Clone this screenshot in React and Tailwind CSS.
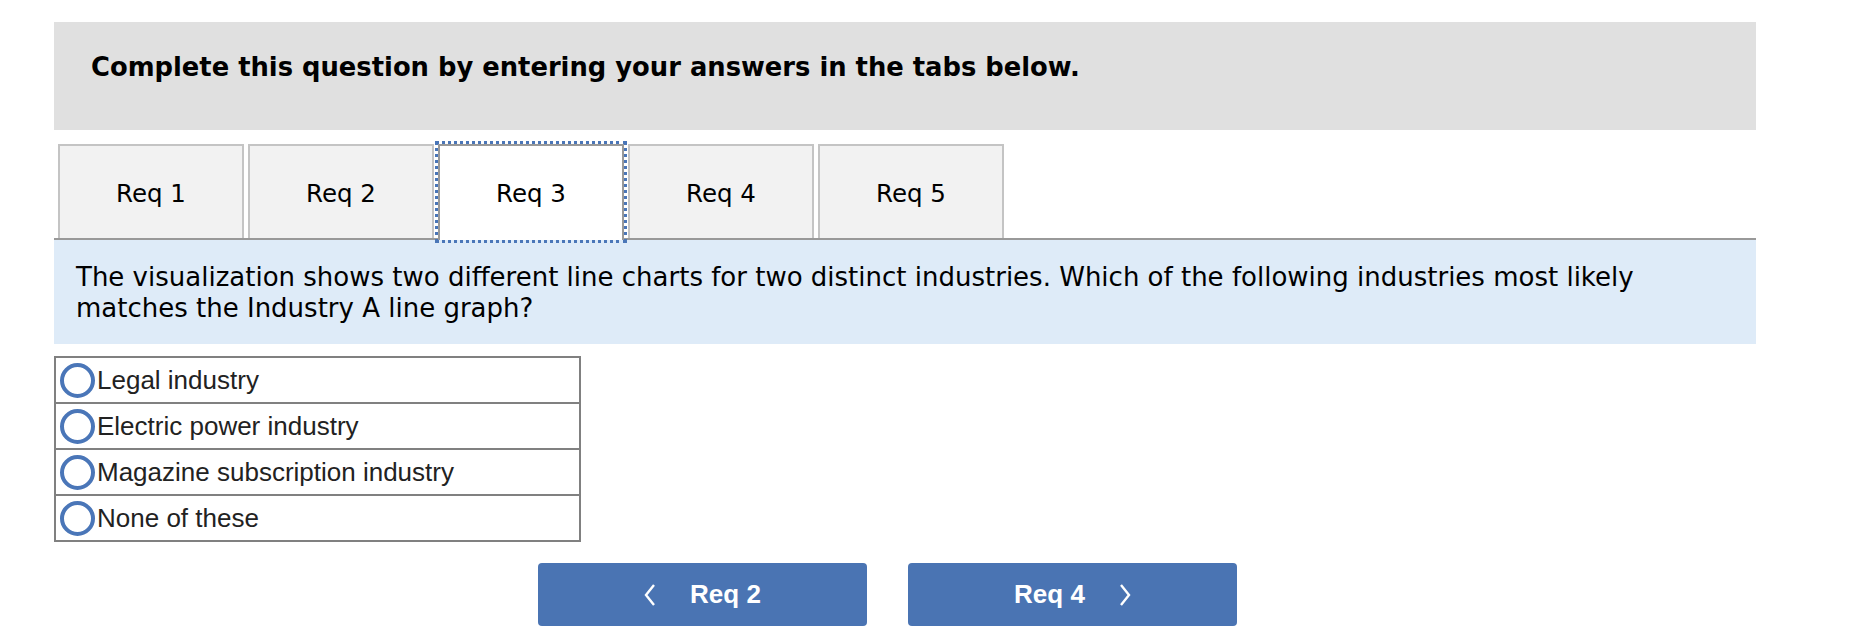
import React from "react";

const TABS = ["Req 1", "Req 2", "Req 3", "Req 4", "Req 5"];
const ACTIVE = 2;

const OPTIONS = [
  "Legal industry",
  "Electric power industry",
  "Magazine subscription industry",
  "None of these",
];

function Chevron({ dir }) {
  return (
    <svg width="12" height="22" viewBox="0 0 12 22" aria-hidden="true">
      <polyline
        points={dir === "left" ? "10,1 2,11 10,21" : "2,1 10,11 2,21"}
        fill="none"
        stroke="white"
        strokeWidth="2.4"
      />
    </svg>
  );
}

function Radio() {
  return (
    <span className="w-[35px] h-[35px] rounded-full border-4 border-[#4a76b8] bg-white shrink-0" />
  );
}

export default function App() {
  return (
    <div className="min-h-screen bg-white font-['DejaVu_Sans',Verdana,sans-serif] text-black">
      <div className="ml-[54px] w-[1702px] pt-[22px]">
        {/* instructions header */}
        <div className="h-[108px] bg-[#e0e0e0] pl-[37px] pt-[30px]">
          <h1 className="text-[25.8px] leading-[30px] font-bold">
            Complete this question by entering your answers in the tabs below.
          </h1>
        </div>

        {/* tabs */}
        <div className="mt-[14px] flex pl-[4px] border-b-2 border-[#999999]">
          {TABS.map((t, i) => (
            <div
              key={t}
              className={`w-[186px] mr-[4px] pt-[4px] flex items-center justify-center border-2 border-b-0 text-[24.5px] ${
                i === ACTIVE
                  ? "bg-white border-[#999999] outline-[3px] outline-dotted outline-[#4a76b8] outline-offset-0 relative z-10 -mb-[2px] h-[96px] pb-[2px]"
                  : "bg-[#f2f2f2] border-[#c4c4c4] h-[94px]"
              }`}
            >
              {t}
            </div>
          ))}
        </div>

        {/* question */}
        <div className="bg-[#deebf8] h-[104px] pl-[22px] pt-[22px]">
          <p className="text-[26px] leading-[31px]">
            The visualization shows two different line charts for two distinct industries. Which of the following industries most likely
            <br />
            matches the Industry A line graph?
          </p>
        </div>

        {/* options */}
        <div className="mt-[12px] w-[527px] border-2 border-[#808080] font-['Liberation_Sans',Arial,sans-serif] text-[26px] text-[#222222]">
          {OPTIONS.map((o, i) => (
            <div
              key={o}
              className={`flex items-center pl-[4px] gap-[2px] ${i > 0 ? "h-[46px] border-t-2 border-[#808080]" : "h-[44px]"}`}
            >
              <Radio />
              <span className="leading-none">{o}</span>
            </div>
          ))}
        </div>

        {/* nav buttons */}
        <div className="mt-[21px] ml-[484px] flex gap-[41px] font-['Liberation_Sans',Arial,sans-serif]">
          <button className="w-[329px] h-[63px] rounded-[4px] bg-[#4a74b3] text-white text-[26px] font-bold flex items-center justify-center gap-[34px]">
            <Chevron dir="left" />
            <span>Req 2</span>
          </button>
          <button className="w-[329px] h-[63px] rounded-[4px] bg-[#4a74b3] text-white text-[26px] font-bold flex items-center justify-center gap-[34px]">
            <span>Req 4</span>
            <Chevron dir="right" />
          </button>
        </div>
      </div>
    </div>
  );
}
